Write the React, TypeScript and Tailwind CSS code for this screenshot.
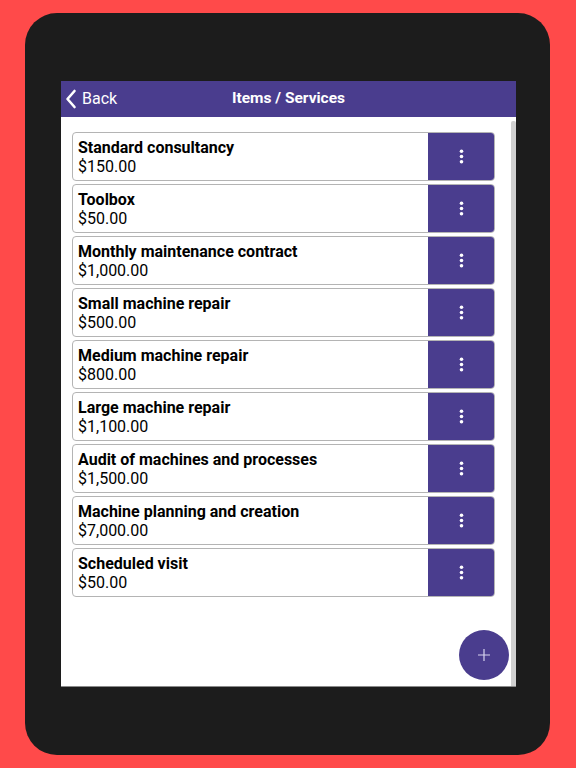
import React from "react"

interface Item {
  name: string
  price: string
}

const items: Item[] = [
  { name: "Standard consultancy", price: "$150.00" },
  { name: "Toolbox", price: "$50.00" },
  { name: "Monthly maintenance contract", price: "$1,000.00" },
  { name: "Small machine repair", price: "$500.00" },
  { name: "Medium machine repair", price: "$800.00" },
  { name: "Large machine repair", price: "$1,100.00" },
  { name: "Audit of machines and processes", price: "$1,500.00" },
  { name: "Machine planning and creation", price: "$7,000.00" },
  { name: "Scheduled visit", price: "$50.00" },
]

const ItemRow: React.FC<{ item: Item }> = ({ item }) => (
  <div className="flex h-[49px] rounded-[4px] border border-[#b4b4b4] overflow-hidden">
    <div className="flex-1 flex flex-col justify-center pl-[5px] pt-[1px] text-black text-[16px] leading-[19px]">
      <span className="font-bold">{item.name}</span>
      <span>{item.price}</span>
    </div>
    <button className="w-[66px] bg-[#4a3d8e] flex items-center justify-center">
      <svg width="5" height="15" viewBox="0 0 5 15" fill="white">
        <circle cx="2.5" cy="2.2" r="1.8" />
        <circle cx="2.5" cy="7.5" r="1.8" />
        <circle cx="2.5" cy="12.8" r="1.8" />
      </svg>
    </button>
  </div>
)

export default function App() {
  return (
    <div
      className="w-[576px] h-[768px] bg-[#ff4a4a] pt-[13px] pl-[25px]"
      style={{ fontFamily: "Roboto, 'Liberation Sans', sans-serif" }}
    >
      <div className="w-[525px] h-[742px] rounded-[32px] bg-[#1c1c1c] pt-[68px] pl-[36px]">
        <div className="w-[455px] h-[606px] bg-white flex flex-col relative border-b border-[#8a8a8a]">
          <div className="h-[36px] bg-[#4a3d8e] flex items-center relative text-white">
            <div className="flex items-center pl-[4px] gap-[5px]">
              <svg width="12" height="20" viewBox="0 0 12 20" fill="none" stroke="white" strokeWidth="2.6" strokeLinecap="round" strokeLinejoin="round">
                <path d="M9.5 2 L2.5 10 L9.5 18" />
              </svg>
              <span className="text-[16px]">Back</span>
            </div>
            <span className="absolute left-0 right-0 text-center font-bold text-[15.5px] pointer-events-none">
              Items / Services
            </span>
          </div>
          <div className="flex-1 flex">
            <div className="flex-1 flex flex-col gap-[3px] pt-[15px] pl-[11px] pr-[16px]">
              {items.map((item) => (
                <ItemRow key={item.name} item={item} />
              ))}
            </div>
            <div className="w-[5px] mt-[4px] bg-[#d0d0d0] rounded-t-[2px]" />
          </div>
          <button className="absolute left-[398px] top-[549px] w-[50px] h-[50px] rounded-full bg-[#4a3d8e] flex items-center justify-center">
            <svg width="12" height="12" viewBox="0 0 12 12" stroke="#d8d4ee" strokeWidth="1.2">
              <path d="M6 0 V12 M0 6 H12" />
            </svg>
          </button>
        </div>
      </div>
    </div>
  )
}
